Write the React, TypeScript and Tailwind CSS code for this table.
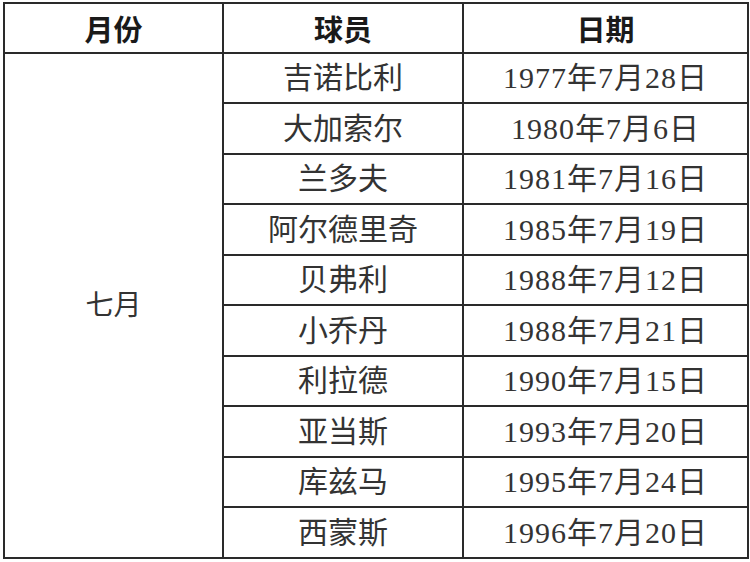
import React from "react";

const rows: [string, string][] = [
  ["吉诺比利", "1977年7月28日"],
  ["大加索尔", "1980年7月6日"],
  ["兰多夫", "1981年7月16日"],
  ["阿尔德里奇", "1985年7月19日"],
  ["贝弗利", "1988年7月12日"],
  ["小乔丹", "1988年7月21日"],
  ["利拉德", "1990年7月15日"],
  ["亚当斯", "1993年7月20日"],
  ["库兹马", "1995年7月24日"],
  ["西蒙斯", "1996年7月20日"],
];

const body = { fontFamily: '"Liberation Serif", "Noto Sans CJK SC", serif' };
const head = { fontFamily: '"Noto Sans CJK SC", sans-serif' };

export default function App() {
  return (
    <div className="w-[750px] h-[562px] bg-white pl-[3px] pt-[2px]">
      <table className="border-collapse table-fixed w-[744px]">
        <colgroup>
          <col className="w-[219px]" />
          <col className="w-[240px]" />
          <col className="w-[285px]" />
        </colgroup>
        <thead>
          <tr className="h-[50px]">
            {["月份", "球员", "日期"].map((h) => (
              <th
                key={h}
                style={head}
                className="border-2 border-[#2a2a2a] text-[29px] font-bold text-[#1a1a1a] text-center align-middle p-0 leading-none"
              >
                {h}
              </th>
            ))}
          </tr>
        </thead>
        <tbody>
          {rows.map(([name, date], i) => (
            <tr key={name} className={i % 2 === 0 ? "h-[50px]" : "h-[51px]"}>
              {i === 0 && (
                <td
                  rowSpan={rows.length}
                  style={body}
                  className="border-2 border-[#2a2a2a] text-[28px] text-[#333] text-center align-middle p-0 leading-none"
                >
                  七月
                </td>
              )}
              <td
                style={body}
                className="border-2 border-[#2a2a2a] text-[30px] text-[#333] text-center align-middle p-0 leading-none"
              >
                {name}
              </td>
              <td
                style={body}
                className="border-2 border-[#2a2a2a] text-[30px] tracking-[1px] text-[#333] text-center align-middle p-0 leading-none"
              >
                {date}
              </td>
            </tr>
          ))}
        </tbody>
      </table>
    </div>
  );
}
